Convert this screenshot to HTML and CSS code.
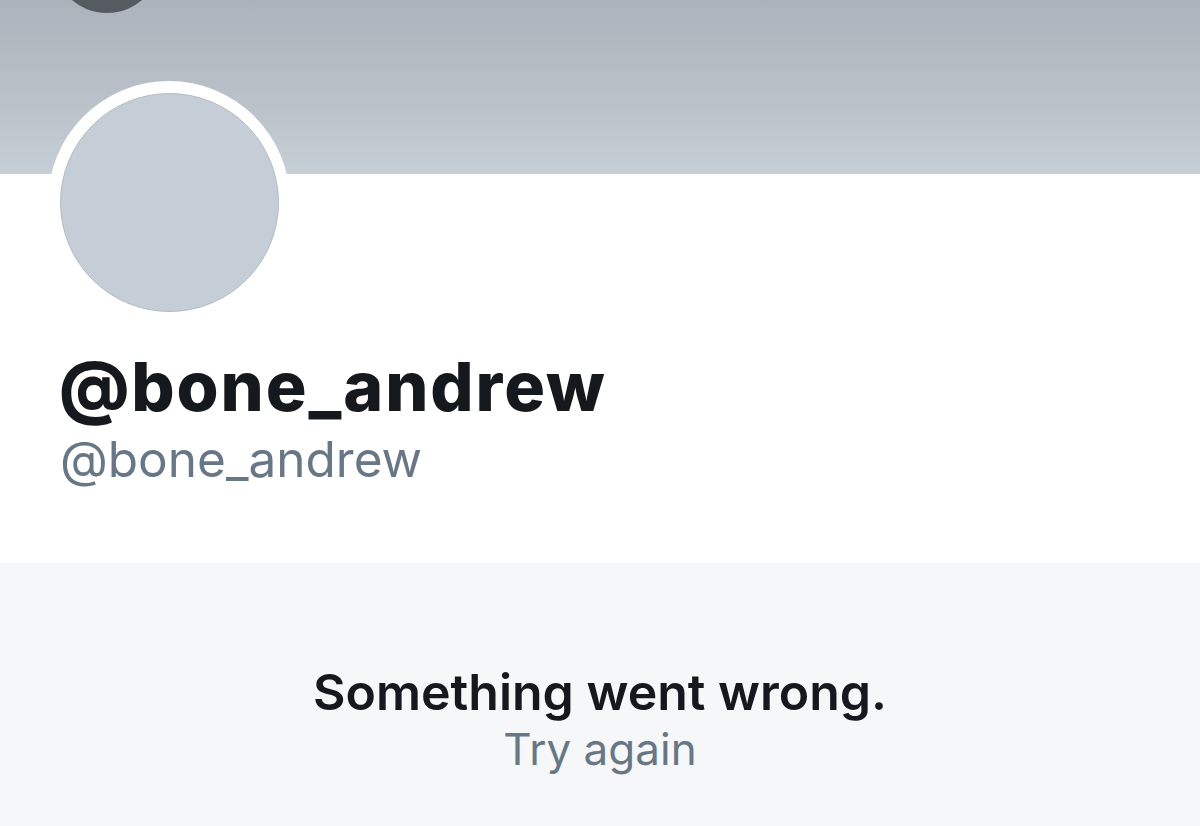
FILE: index.html
```html
<!DOCTYPE html>
<html lang="en">
<head>
<meta charset="utf-8">
<title>@bone_andrew</title>
<link rel="stylesheet" href="styles.css">
</head>
<body>
<div class="page">
  <header class="banner">
    <span class="back-button"></span>
  </header>
  <section class="profile">
    <div class="avatar-ring"><div class="avatar"></div></div>
    <h1 class="display-name">@bone_andrew</h1>
    <div class="handle">@bone_andrew</div>
  </section>
  <section class="error">
    <div class="error-title">Something went wrong.</div>
    <div class="error-retry">Try again</div>
  </section>
</div>
</body>
</html>
```

FILE: styles.css
```css
html, body {
  margin: 0;
  padding: 0;
  background: #ffffff;
}
body {
  font-family: Inter, "Noto Sans", "Liberation Sans", sans-serif;
  color: #15181c;
}
.page {
  width: 1200px;
  height: 826px;
  overflow: hidden;
  display: flex;
  flex-direction: column;
}
.banner {
  position: relative;
  height: 174px;
  flex: none;
  background: linear-gradient(180deg, #acb3bc 0%, #b8bfc7 50%, #c6ced6 100%);
}
.back-button {
  position: absolute;
  left: 53px;
  top: -95px;
  width: 108px;
  height: 108px;
  border-radius: 50%;
  background: #565b61;
}
.profile {
  height: 389px;
  flex: none;
  padding-left: 48px;
  box-sizing: border-box;
}
.avatar-ring {
  width: 242px;
  height: 242px;
  margin-top: -93px;
  border-radius: 50%;
  background: #ffffff;
  display: flex;
  align-items: center;
  justify-content: center;
  position: relative;
}
.avatar {
  width: 219px;
  height: 219px;
  border-radius: 50%;
  background: #c5ced6;
  border: 1px solid #b4bcc4;
  box-sizing: border-box;
}
.display-name {
  margin: 22px 0 0 11px;
  font-size: 68px;
  font-weight: 800;
  line-height: 82px;
  letter-spacing: 1.9px;
  color: #15181c;
}
.handle {
  margin: 1px 0 0 12px;
  font-size: 49.5px;
  font-weight: 400;
  line-height: 62px;
  color: #687786;
}
.error {
  flex: 1;
  background: #f5f7f9;
  display: flex;
  flex-direction: column;
  align-items: center;
  padding-top: 98px;
}
.error-title {
  font-size: 50px;
  font-weight: 600;
  line-height: 62px;
  color: #15181c;
}
.error-retry {
  font-size: 44px;
  line-height: 52px;
  color: #687786;
}
```
